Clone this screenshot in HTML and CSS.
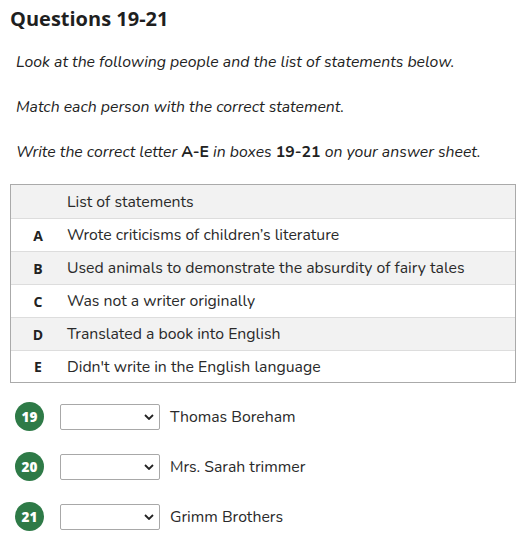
FILE: index.html
```html
<!DOCTYPE html>
<html>
<head>
<meta charset="utf-8">
<link rel="stylesheet" href="styles.css">
</head>
<body>
<div class="page">
  <h2 class="title">Questions 19-21</h2>
  <p class="instr">Look at the following people and the list of statements below.</p>
  <p class="instr">Match each person with the correct statement.</p>
  <p class="instr">Write the correct letter <b>A-E</b> in boxes <b>19-21</b> on your answer sheet.</p>
  <div class="table">
    <div class="row gray"><span class="letter"></span><span class="text">List of statements</span></div>
    <div class="row"><span class="letter">A</span><span class="text">Wrote criticisms of children’s literature</span></div>
    <div class="row gray"><span class="letter">B</span><span class="text">Used animals to demonstrate the absurdity of fairy tales</span></div>
    <div class="row"><span class="letter">C</span><span class="text">Was not a writer originally</span></div>
    <div class="row gray"><span class="letter">D</span><span class="text">Translated a book into English</span></div>
    <div class="row"><span class="letter">E</span><span class="text">Didn't write in the English language</span></div>
  </div>
  <div class="questions">
    <div class="q"><span class="num">19</span><div class="sel"><svg viewBox="0 0 10 6" width="10" height="6"><path d="M1 1l4 4 4-4" fill="none" stroke="#222" stroke-width="1.8"/></svg></div><span class="name">Thomas Boreham</span></div>
    <div class="q"><span class="num">20</span><div class="sel"><svg viewBox="0 0 10 6" width="10" height="6"><path d="M1 1l4 4 4-4" fill="none" stroke="#222" stroke-width="1.8"/></svg></div><span class="name">Mrs. Sarah trimmer</span></div>
    <div class="q"><span class="num">21</span><div class="sel"><svg viewBox="0 0 10 6" width="10" height="6"><path d="M1 1l4 4 4-4" fill="none" stroke="#222" stroke-width="1.8"/></svg></div><span class="name">Grimm Brothers</span></div>
  </div>
</div>
</body>
</html>
```
FILE: styles.css
```css
* { box-sizing: border-box; }
body {
  margin: 0;
  background: #fff;
  font-family: "Nunito", "Lato", sans-serif;
  color: #222;
}
.page {
  padding: 6px 8px 0 10px;
}
.title {
  margin: 0;
  font-family: "Open Sans", sans-serif;
  font-weight: 700;
  font-size: 20px;
  line-height: 26px;
  color: #1f1f1f;
}
.instr {
  margin: 0;
  padding-left: 6px;
  font-style: italic;
  font-size: 15.8px;
  line-height: 20px;
  color: #222;
}
.instr:nth-of-type(1) { margin-top: 20px; }
.instr + .instr { margin-top: 25px; }
.instr b { font-weight: 700; font-style: normal; }
.table {
  margin-top: 22px;
  width: 506px;
  border: 1px solid #aaa;
}
.row {
  display: flex;
  align-items: center;
  height: 33px;
  border-top: 1px solid #ddd;
  font-size: 15.8px;
  color: #2a2a2a;
}
.row:first-child { border-top: none; height: 33px; }
.row:last-child { height: 32px; }
.row.gray { background: #f2f2f2; }
.letter {
  width: 54px;
  text-align: center;
  font-family: "Open Sans", sans-serif;
  font-weight: 700;
  font-size: 14px;
  color: #222;
}
.text { padding-left: 2px; }
.questions {
  margin-top: 19px;
  display: flex;
  flex-direction: column;
  gap: 21px;
}
.q {
  display: flex;
  align-items: center;
  height: 29px;
}
.num {
  width: 29px;
  height: 29px;
  margin-left: 5px;
  border-radius: 50%;
  background: #2e7a47;
  color: #fff;
  font-family: "Open Sans", sans-serif;
  font-weight: 800;
  font-size: 13.5px;
  display: flex;
  align-items: center;
  justify-content: center;
}
.sel {
  margin-left: 16px;
  width: 100px;
  height: 26px;
  border: 1px solid #a8a8a8;
  border-radius: 2px;
  background: #fff;
  display: flex;
  align-items: center;
  justify-content: flex-end;
  padding-right: 5px;
}
.name {
  margin-left: 10px;
  font-size: 15.8px;
  color: #2a2a2a;
}
```
